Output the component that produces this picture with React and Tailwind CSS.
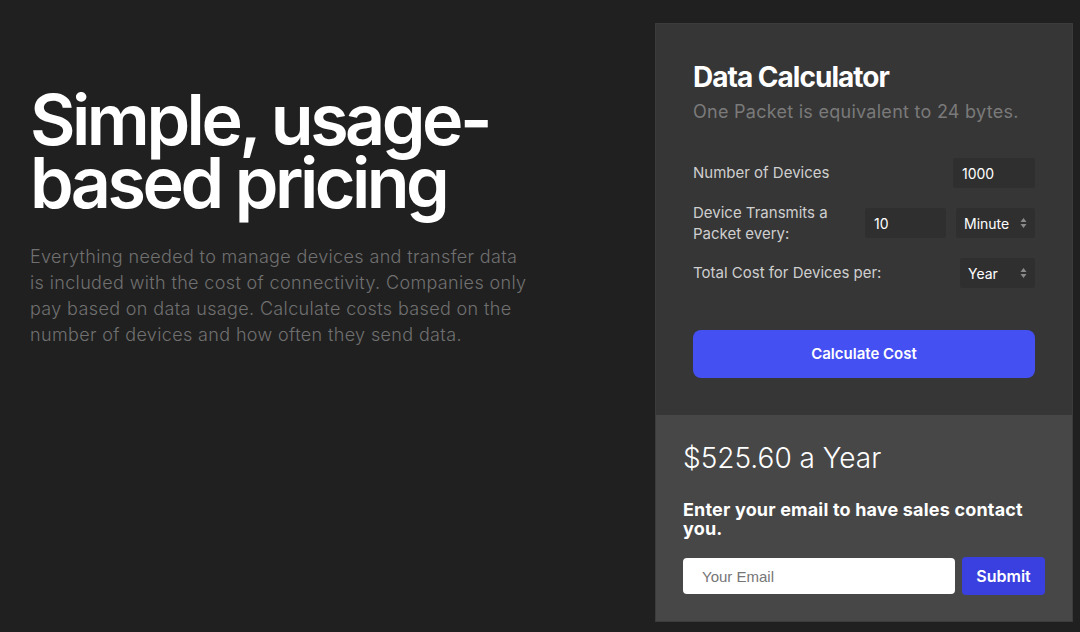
import React, { useState } from "react";

const font = { fontFamily: "Inter, 'Noto Sans', sans-serif" };

function Arrows() {
  return (
    <svg width="7" height="12" viewBox="0 0 7 12" className="shrink-0">
      <path d="M3.5 1 L6.5 5 L0.5 5 Z" fill="#8a8a8a" />
      <path d="M3.5 11 L6.5 7 L0.5 7 Z" fill="#8a8a8a" />
    </svg>
  );
}

function Field({ value, className }) {
  return (
    <div className={`h-[30px] bg-[#2f2f2f] rounded-[3px] flex items-center pl-[9px] text-[14px] text-white ${className}`}>
      {value}
    </div>
  );
}

function Select({ value, className }) {
  return (
    <div className={`h-[30px] bg-[#2f2f2f] rounded-[3px] flex items-center justify-between pl-[8px] pr-[8px] text-[14px] text-white ${className}`}>
      <span>{value}</span>
      <Arrows />
    </div>
  );
}

export default function App() {
  const [email, setEmail] = useState("");

  return (
    <div className="w-[1080px] h-[632px] bg-[#202020] flex overflow-hidden" style={font}>
      {/* Left copy */}
      <div className="w-[560px] pl-[30px] pt-[88px]">
        <h1 className="text-[70px] leading-[63px] font-semibold tracking-[-0.05em] text-white">
          Simple, usage-
          <br />
          based pricing
        </h1>
        <p className="mt-[30px] w-[502px] text-[18px] leading-[26px] font-light tracking-[0.02em] text-[#707070]">
          Everything needed to manage devices and transfer data is included with the cost of connectivity. Companies only pay based on data usage. Calculate costs based on the number of devices and how often they send data.
        </p>
      </div>

      {/* Calculator panel */}
      <div className="ml-auto mr-[7px] mt-[23px] w-[418px] h-[599px] flex flex-col border border-[#3c3c3c]">
        <div className="bg-[#363636] px-[37px] pt-[35px] pb-[37px]">
          <h2 className="text-[28px] leading-[36px] font-bold tracking-[-0.035em] text-white">Data Calculator</h2>
          <p className="mt-[3px] text-[18px] leading-[28px] text-[#7a7a7a] tracking-[0.015em]">
            One Packet is equivalent to 24 bytes.
          </p>

          <div className="mt-[32px] flex flex-col gap-[14px] text-[15px] text-[#cfcfcf]">
            <div className="flex items-center">
              <span className="flex-1">Number of Devices</span>
              <Field value="1000" className="w-[82px]" />
            </div>
            <div className="flex items-center">
              <span className="w-[160px] leading-[21px]">Device Transmits a Packet every:</span>
              <div className="ml-auto flex items-center gap-[10px]">
                <Field value="10" className="w-[81px]" />
                <Select value="Minute" className="w-[79px]" />
              </div>
            </div>
            <div className="flex items-center">
              <span className="flex-1">Total Cost for Devices per:</span>
              <Select value="Year" className="w-[75px] pl-[8px]" />
            </div>
          </div>

          <button className="mt-[42px] w-full h-[48px] rounded-[8px] bg-[#4450f2] text-white text-[15px] font-semibold">
            Calculate Cost
          </button>
        </div>

        <div className="flex-1 bg-[#474747] px-[27px] pt-[25px]">
          <div className="text-[28px] leading-[36px] font-light text-white">$525.60 a Year</div>
          <div className="mt-[24px] text-[18px] leading-[19px] font-bold text-white tracking-[0.01em]">
            Enter your email to have sales contact you.
          </div>
          <div className="mt-[19px] flex items-center gap-[7px]">
            <input
              value={email}
              onChange={(e) => setEmail(e.target.value)}
              placeholder="Your Email"
              className="w-[272px] h-[36px] rounded-[4px] bg-white pl-[19px] text-[15px] text-black placeholder:text-[#767676] outline-none"
              style={{ fontFamily: "'Liberation Sans', Arial, sans-serif" }}
            />
            <button className="w-[83px] h-[38px] rounded-[4px] bg-[#3a40e0] text-white text-[16px] font-semibold">
              Submit
            </button>
          </div>
        </div>
      </div>
    </div>
  );
}
